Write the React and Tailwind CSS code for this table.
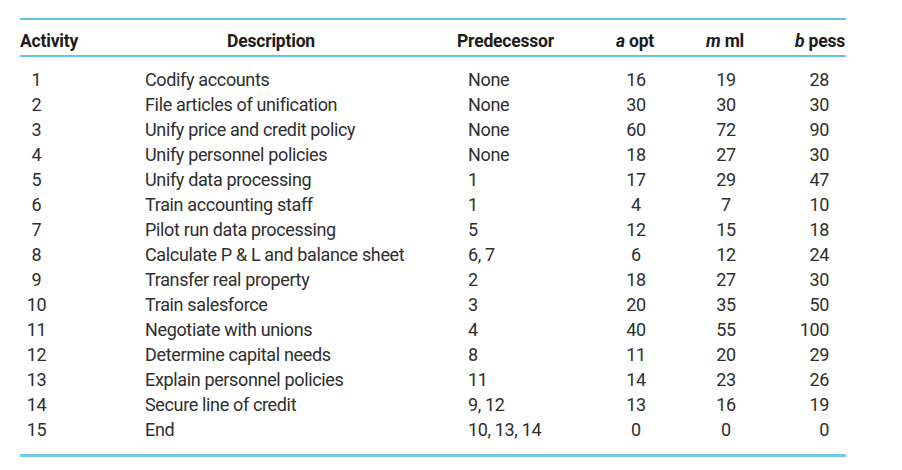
import React from "react";

const rows = [
    ["1", "Codify accounts", "None", "16", "19", "28"],
    ["2", "File articles of unification", "None", "30", "30", "30"],
    ["3", "Unify price and credit policy", "None", "60", "72", "90"],
    ["4", "Unify personnel policies", "None", "18", "27", "30"],
    ["5", "Unify data processing", "1", "17", "29", "47"],
    ["6", "Train accounting staff", "1", "4", "7", "10"],
    ["7", "Pilot run data processing", "5", "12", "15", "18"],
    ["8", "Calculate P & L and balance sheet", "6, 7", "6", "12", "24"],
    ["9", "Transfer real property", "2", "18", "27", "30"],
    ["10", "Train salesforce", "3", "20", "35", "50"],
    ["11", "Negotiate with unions", "4", "40", "55", "100"],
    ["12", "Determine capital needs", "8", "11", "20", "29"],
    ["13", "Explain personnel policies", "11", "14", "23", "26"],
    ["14", "Secure line of credit", "9, 12", "13", "16", "19"],
    ["15", "End", "10, 13, 14", "0", "0", "0"],
];

const cols = "grid grid-cols-[125px_312px_143px_70px_110px_66px]";

const App = () => {
    return (
        <div className="w-[902px] h-[470px] bg-white pt-[18px] pl-[20px] font-['Roboto',sans-serif] text-[#2e2e2e]">
            <div className="w-[826px]">
                <div className="h-[2px] bg-[#61c3e6]" />
                <div className={`${cols} pt-[11px] pb-[4px] text-[17.5px] leading-[20px] font-bold text-[#1c1c1c] tracking-[-0.2px]`}>
                    <div>Activity</div>
                    <div className="text-center pr-[60px]">Description</div>
                    <div>Predecessor</div>
                    <div className="text-center"><i>a</i> opt</div>
                    <div className="text-center"><i>m</i> ml</div>
                    <div className="text-right pr-[1px]"><i>b</i> pess</div>
                </div>
                <div className="h-[2px] bg-[#61c3e6]" />
                <div className="pt-[10px] pb-[12px]">
                    {rows.map((r) => (
                        <div key={r[0]} className={`${cols} text-[18px] leading-[25px] tracking-[-0.35px]`}>
                            <div className="pl-[3px]"><span className="inline-block w-[27px] text-center">{r[0]}</span></div>
                            <div>{r[1]}</div>
                            <div className="pl-[11px]">{r[2]}</div>
                            <div className="text-center pl-[2px]">{r[3]}</div>
                            <div className="text-center pl-[2px]">{r[4]}</div>
                            <div className="text-right pr-[17px]">{r[5]}</div>
                        </div>
                    ))}
                </div>
                <div className="h-[3px] bg-[#6ecbe6]" />
            </div>
        </div>
    );
};

export default App;
